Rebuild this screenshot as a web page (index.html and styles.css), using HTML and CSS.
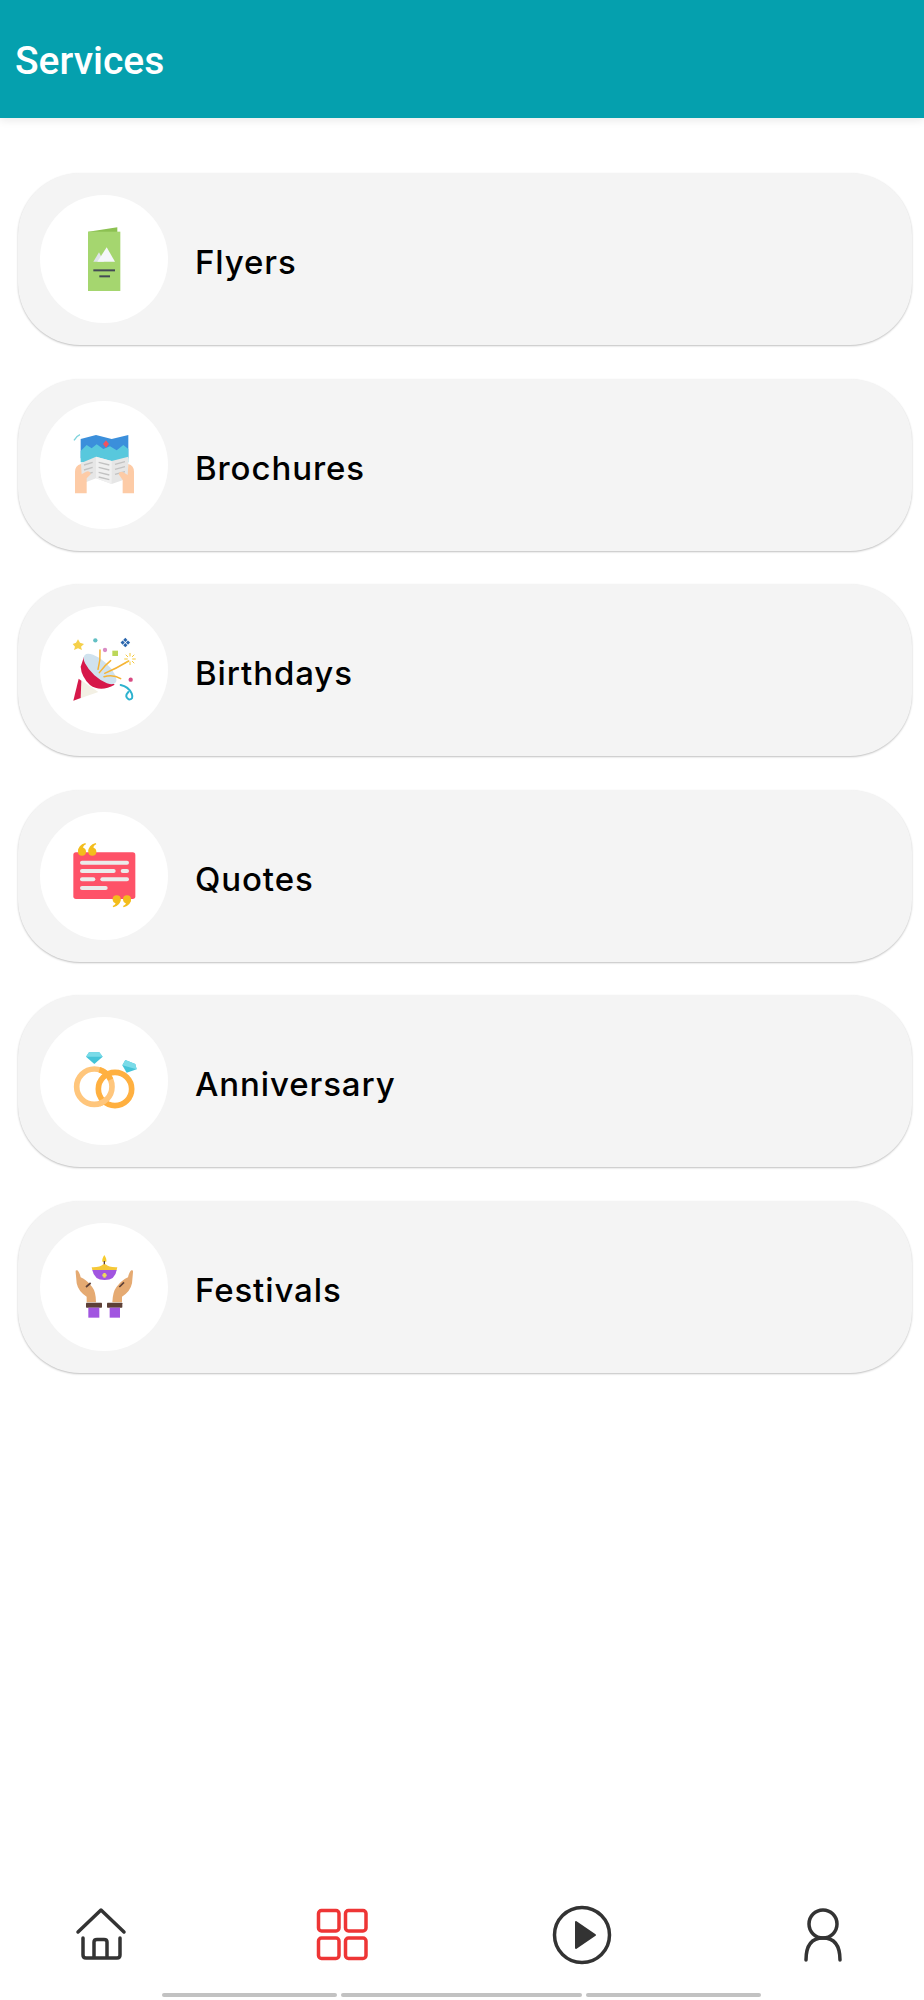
FILE: index.html
```html
<!DOCTYPE html>
<html lang="en">
<head>
    <meta charset="UTF-8">
    <meta name="viewport" content="width=device-width, initial-scale=1.0">
    <title>Services</title>
    <link rel="stylesheet" href="styles.css">
</head>
<body>
    <header class="topbar">
        <h1 class="topbar-title">Services</h1>
    </header>

    <main class="service-list">
        <div class="service-card">
            <div class="service-icon">
                <svg viewBox="-3 -3 270 270" width="90" height="90">
                    <polygon points="85,50 172,37 172,60 85,60" fill="#8cc152"/>
                    <rect x="84" y="50" width="97" height="178" fill="#a5d66f"/>
                    <polygon points="100,140 117,112 132,140" fill="#dfe3ea"/>
                    <polygon points="112,140 140,97 165,140" fill="#f5f7fa"/>
                    <rect x="100" y="163" width="65" height="6" fill="#434a54"/>
                    <rect x="118" y="181" width="32" height="6" fill="#434a54"/>
                </svg>
            </div>
            <span class="service-name">Flyers</span>
        </div>

        <div class="service-card">
            <div class="service-icon">
                <svg viewBox="-3 -15 270 270" width="90" height="90">
                    <path d="M42 46 Q48 34 60 29" fill="none" stroke="#7fd3dc" stroke-width="4"/>
                    <polygon points="62,42 108,30 155,42 205,30 205,100 62,100" fill="#3b8fdb"/>
                    <polygon points="62,78 80,60 95,70 110,58 130,72 150,64 170,76 190,60 205,72 205,112 62,112" fill="#58c8dd"/>
                    <polygon points="138,46 147,57 138,68 129,57" fill="#f0525f"/>
                    <polygon points="62,115 108,95 155,108 205,95 205,160 155,177 108,160 62,178" fill="#e6e6e6"/>
                    <polygon points="108,95 155,108 155,177 108,160" fill="#f0f0f0"/>
                    <g stroke="#c2c2c2" stroke-width="4">
                        <path d="M72 120 L98 112 M72 135 L98 127 M72 150 L98 142"/>
                        <path d="M116 112 L148 120 M116 127 L148 135 M116 142 L148 150 M116 156 L148 164"/>
                        <path d="M165 118 L195 110 M165 133 L195 125 M165 148 L195 140"/>
                    </g>
                    <path d="M63 117 Q45 122 45 140 L45 205 L80 205 L80 160 L92 148 Q90 136 78 140 L65 148 Z" fill="#fdcba6"/>
                    <path d="M205 117 Q222 122 222 140 L222 205 L188 205 L188 165 L176 148 Q178 136 190 142 L203 150 Z" fill="#fdcba6"/>
                </svg>
            </div>
            <span class="service-name">Brochures</span>
        </div>

        <div class="service-card">
            <div class="service-icon">
                <svg viewBox="-3 -15 270 270" width="90" height="90">
                    <polygon points="54,28 60,38 72,42 63,50 66,60 54,55 42,60 45,50 38,42 48,38" fill="#f5d04a"/>
                    <circle cx="106" cy="31" r="6.500" fill="#63c0c4"/>
                    <circle cx="135" cy="60" r="6.500" fill="#d98cc4"/>
                    <rect x="157" y="62" width="17" height="16" fill="#bcd75a"/>
                    <g fill="#2a66ad">
                        <rect x="192" y="25" width="9" height="9" transform="rotate(45 196 29)"/>
                        <rect x="192" y="41" width="9" height="9" transform="rotate(45 196 45)"/>
                        <rect x="184" y="33" width="9" height="9" transform="rotate(45 188 37)"/>
                        <rect x="200" y="33" width="9" height="9" transform="rotate(45 204 37)"/>
                    </g>
                    <polygon points="60,148 40,212 115,186" fill="#f3f0e4"/>
                    <polygon points="56,146 40,212 62,204 64,152" fill="#d6184a"/>
                    <path d="M72 80 L62 110 Q64 140 90 165 Q122 188 164 164 Z" fill="#d6184a"/>
                    <ellipse cx="120" cy="117" rx="62" ry="25" transform="rotate(42 120 117)" fill="#d0e2ee"/>
                    <g fill="none" stroke="#f5b335" stroke-width="4.500" stroke-linecap="round">
                        <path d="M114 118 Q122 90 120 60"/>
                        <path d="M118 128 Q135 105 152 92"/>
                        <path d="M134 130 Q170 115 206 93"/>
                        <path d="M132 140 Q160 132 182 146"/>
                    </g>
                    <g stroke="#f5c838" stroke-width="3" stroke-linecap="round">
                        <path d="M210 70 V78 M210 96 V104 M194 87 H202 M218 87 H226 M198 75 L203 80 M217 94 L222 99 M222 75 L217 80 M203 94 L198 99"/>
                    </g>
                    <circle cx="212" cy="149" r="6.500" fill="#d84a82"/>
                    <path d="M182 165 Q205 170 215 190 Q222 210 206 208 Q192 200 205 186" fill="none" stroke="#2cb2cf" stroke-width="6" stroke-linecap="round"/>
                </svg>
            </div>
            <span class="service-name">Birthdays</span>
        </div>

        <div class="service-card">
            <div class="service-icon">
                <svg viewBox="-3 -12 270 270" width="90" height="90">
                    <rect x="40" y="52" width="186" height="140" rx="8" fill="#fe5268"/>
                    <g fill="#ebebeb">
                        <rect x="60" y="77" width="147" height="12" rx="6"/>
                        <rect x="60" y="102" width="107" height="12" rx="6"/>
                        <rect x="182" y="102" width="25" height="12" rx="6"/>
                        <rect x="60" y="127" width="46" height="12" rx="6"/>
                        <rect x="121" y="127" width="86" height="12" rx="6"/>
                        <rect x="60" y="153" width="83" height="12" rx="6"/>
                    </g>
                    <g fill="#f3bd1c">
                        <circle cx="66" cy="50" r="12"/>
                        <path d="M54 50 Q54 30 76 24 L78 28 Q68 33 70 38 Z"/>
                        <circle cx="97" cy="50" r="12"/>
                        <path d="M85 50 Q85 30 107 24 L109 28 Q99 33 101 38 Z"/>
                        <circle cx="170" cy="193" r="12"/>
                        <path d="M182 193 Q182 211 160 217 L158 213 Q168 208 166 205 Z"/>
                        <circle cx="201" cy="193" r="12"/>
                        <path d="M213 193 Q213 211 191 217 L189 213 Q199 208 197 205 Z"/>
                    </g>
                </svg>
            </div>
            <span class="service-name">Quotes</span>
        </div>

        <div class="service-card">
            <div class="service-icon">
                <svg viewBox="-3 -12 270 270" width="90" height="90">
                    <polygon points="87,37 118,37 128,50 103,72 78,50" fill="#45c4d8"/>
                    <polygon points="87,37 118,37 128,50 78,50" fill="#7adbe8"/>
                    <polygon points="196,60 226,72 230,88 200,98 187,76" fill="#45c4d8"/>
                    <polygon points="196,60 226,72 230,88 187,76" fill="#7adbe8"/>
                    <circle cx="103" cy="140" r="53" fill="none" stroke="#ffc67c" stroke-width="17"/>
                    <circle cx="165" cy="147" r="50" fill="none" stroke="#ffb040" stroke-width="17"/>
                    <path d="M118 89 A53 53 0 0 1 152 119" fill="none" stroke="#ffb040" stroke-width="17"/>
                    <path d="M118 191 A53 53 0 0 0 142 176" fill="none" stroke="#ffc67c" stroke-width="17"/>
                </svg>
            </div>
            <span class="service-name">Anniversary</span>
        </div>

        <div class="service-card">
            <div class="service-icon">
                <svg viewBox="-3 -9 270 270" width="90" height="90">
                    <path d="M133 30 Q125 42 127 50 L139 50 Q141 42 133 30 Z" fill="#f7cc2e"/>
                    <rect x="131" y="48" width="4" height="14" fill="#5d4037"/>
                    <path d="M95 67 Q120 68 130 58 L137 58 Q146 68 172 67 L170 75 L97 75 Z" fill="#f5c838"/>
                    <path d="M97 75 H170 Q166 105 134 105 Q102 105 97 75 Z" fill="#a155e0"/>
                    <rect x="130" y="84" width="7" height="14" fill="#eedd5a"/>
                    <rect x="127" y="88" width="13" height="6" fill="#eedd5a"/>
                    <path d="M47 82 Q45 75 52 76 Q58 80 62 97 Q80 105 96 125 Q108 140 108 172 L80 172 L80 155 Q55 140 50 115 Z" fill="#e5aa72"/>
                    <path d="M219 82 Q221 75 214 76 Q208 80 204 97 Q186 105 170 125 Q158 140 157 172 L186 172 L186 155 Q211 140 216 115 Z" fill="#e5aa72"/>
                    <path d="M78 126 L92 114 M178 126 L192 112" stroke="#5d4037" stroke-width="5"/>
                    <rect x="78" y="173" width="48" height="15" rx="2" fill="#5d4037"/>
                    <rect x="141" y="173" width="46" height="15" rx="2" fill="#5d4037"/>
                    <rect x="85" y="188" width="33" height="30" fill="#a155e0"/>
                    <rect x="149" y="188" width="31" height="30" fill="#a155e0"/>
                </svg>
            </div>
            <span class="service-name">Festivals</span>
        </div>
    </main>

    <footer class="bottom-nav">
        <div class="nav-icons">
            <svg class="nav-icon" viewBox="0 0 60 60" width="60" height="60">
                <path d="M7 27 L30 5 L53 27" fill="none" stroke="#333" stroke-width="3.500" stroke-linecap="round" stroke-linejoin="round"/>
                <path d="M12 33 V50 Q12 53 15 53 H46 Q49 53 49 50 V33 M23 53 V37 Q23 34.500 26 34.500 H33 Q36 34.500 36 37 V53" fill="none" stroke="#333" stroke-width="3.500" stroke-linecap="round"/>
            </svg>
            <svg class="nav-icon" viewBox="0 0 60 60" width="60" height="60">
                <g fill="none" stroke="#ee3535" stroke-width="3.500">
                    <rect x="6.500" y="5.500" width="20.500" height="20.500" rx="3"/>
                    <rect x="33.500" y="5.500" width="20.500" height="20.500" rx="3"/>
                    <rect x="6.500" y="33" width="20.500" height="20.500" rx="3"/>
                    <rect x="33.500" y="33" width="20.500" height="20.500" rx="3"/>
                </g>
            </svg>
            <svg class="nav-icon" viewBox="0 0 60 60" width="60" height="60">
                <circle cx="30" cy="30" r="27.500" fill="none" stroke="#333" stroke-width="3.500"/>
                <path d="M24 17 L43 30 L24 43 Z" fill="#333" stroke="#333" stroke-width="2" stroke-linejoin="round"/>
            </svg>
            <svg class="nav-icon" viewBox="0 0 60 60" width="60" height="60">
                <circle cx="30" cy="19" r="14" fill="none" stroke="#333" stroke-width="3.500"/>
                <path d="M13 55 Q13 33 30 33 Q47 33 47 55" fill="none" stroke="#333" stroke-width="3.500" stroke-linecap="round"/>
            </svg>
        </div>
        <div class="nav-lines">
            <span class="nav-line nav-line-side"></span>
            <span class="nav-line nav-line-mid"></span>
            <span class="nav-line nav-line-side"></span>
        </div>
    </footer>
</body>
</html>
```

FILE: styles.css
```css
html,
body {
    margin: 0;
    padding: 0;
    height: 100%;
}

body {
    display: flex;
    flex-direction: column;
    min-height: 2000px;
    background-color: white;
    font-family: Inter, "Noto Sans", sans-serif;
}

.topbar {
    display: flex;
    align-items: center;
    height: 118px;
    padding: 4px 0 0 15px;
    box-sizing: border-box;
    background-color: #05a0ae;
    box-shadow: 0 3px 8px rgba(0, 0, 0, 0.08);
}

.topbar-title {
    margin: 0;
    color: white;
    font-family: Roboto, sans-serif;
    font-size: 39px;
    font-weight: 500;
}

.service-list {
    flex: 1;
    display: flex;
    flex-direction: column;
    gap: 33.6px;
    padding: 55px 12px 0 18px;
}

.service-card {
    display: flex;
    align-items: center;
    gap: 27px;
    height: 172px;
    padding-left: 22px;
    border-radius: 62px;
    background-color: #f4f4f4;
    box-shadow: 0 1px 2px rgba(0, 0, 0, 0.25);
}

.service-icon {
    display: flex;
    align-items: center;
    justify-content: center;
    width: 128px;
    height: 128px;
    border-radius: 50%;
    background-color: white;
}

.service-name {
    padding-top: 6px;
    color: black;
    font-size: 33px;
    font-weight: 500;
    letter-spacing: 0.9px;
}

.bottom-nav {
    height: 95px;
    display: flex;
    flex-direction: column;
    justify-content: space-between;
}

.nav-icons {
    display: flex;
    justify-content: space-between;
    padding: 0 71px;
}

.nav-icon {
    display: block;
}

.nav-lines {
    display: flex;
    justify-content: center;
    gap: 4px;
    padding: 0 2px 3px 0;
}

.nav-line {
    height: 4px;
    background-color: #c2c2c2;
    border-radius: 2px;
}

.nav-line-side {
    width: 175px;
}

.nav-line-mid {
    width: 241px;
}
```
